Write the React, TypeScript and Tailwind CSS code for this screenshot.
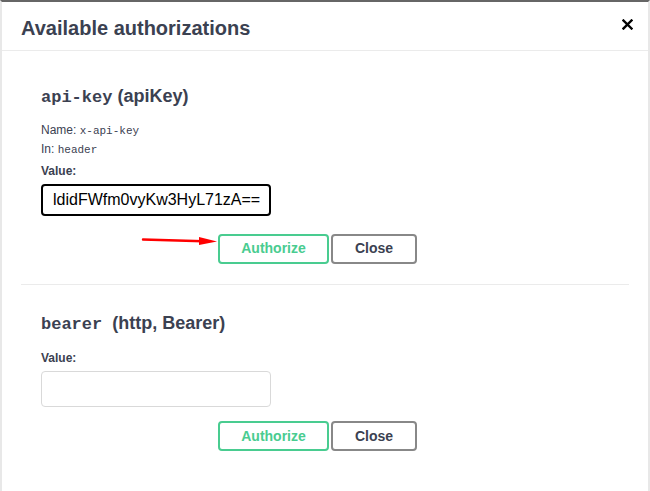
import React from "react";

const sans = "font-['Liberation_Sans',Arial,sans-serif]";
const mono = "font-['Liberation_Mono','DejaVu_Sans_Mono',monospace]";

const Buttons = ({ arrow }: { arrow?: boolean }) => (
  <div className="relative flex gap-[2px] pl-[177px]">
    {arrow && (
      <svg className="absolute left-[100px] top-[1px]" width="78" height="12" viewBox="0 0 78 12">
        <path d="M2 4.5 L62 6.2" stroke="#f00" strokeWidth="2.4" strokeLinecap="round" />
        <path d="M58 2 L76 6.4 L58 10 Z" fill="#f00" />
      </svg>
    )}
    <button className="h-[30px] w-[111px] rounded-[4px] border-2 border-[#49cc90] text-[14px] font-bold text-[#49cc90]">
      Authorize
    </button>
    <button className="h-[30px] w-[86px] rounded-[4px] border-2 border-[#888] text-[14px] font-bold text-[#3b4151]">
      Close
    </button>
  </div>
);

export default function App() {
  return (
    <div className={`${sans} h-[491px] w-[650px] overflow-hidden bg-white`}>
      <div className="h-full border-x-2 border-t-2 border-x-[#e8e8e8] border-t-[#666] bg-white">
        <div className="flex h-[49px] items-center justify-between border-b border-[#ebebeb] pl-[19px] pr-[15px]">
          <h3 className="pt-[3px] text-[20px] font-bold text-[#3b4151]">Available authorizations</h3>
          <svg className="mb-[4px]" width="11" height="11" viewBox="0 0 11 11">
            <path d="M1.5 1.5 L9.5 9.5 M9.5 1.5 L1.5 9.5" stroke="#000" strokeWidth="2.4" strokeLinecap="square" />
          </svg>
        </div>

        <div className="px-[19px]">
          <div className="px-[20px] pt-[32px] pb-[20px]">
            <h4 className="text-[18px] font-bold text-[#3b4151]">
              <span className={`${mono} text-[17px]`}>api-key</span> (apiKey)
            </h4>
            <div className="mt-[10px] text-[12px] text-[#3b4151]">
              <div className="h-[19px] leading-[19px]">
                Name: <span className={`${mono} text-[11px] leading-[19px]`}>x-api-key</span>
              </div>
              <div className="h-[19px] leading-[19px]">
                In: <span className={`${mono} text-[11px] leading-[19px]`}>header</span>
              </div>
            </div>
            <div className="mt-[3px] text-[12px] font-bold text-[#3b4151]">Value:</div>
            <div className="mt-[4px] flex h-[32px] w-[230px] items-center rounded-[4px] border-2 border-black px-[10px] text-[16px] text-black">
              ldidFWfm0vyKw3HyL71zA==<span className="ml-[1px] inline-block h-[18px] w-px bg-black" />
            </div>
            <div className="mt-[18px]">
              <Buttons arrow />
            </div>
          </div>

          <div className="border-t border-[#ebebeb] px-[20px] pt-[25px]">
            <h4 className="text-[18px] font-bold text-[#3b4151]">
              <span className={`${mono} text-[17px]`}>bearer</span>{" "}&nbsp;(http, Bearer)
            </h4>
            <div className="mt-[12px] text-[12px] font-bold text-[#3b4151]">Value:</div>
            <div className="mt-[4px] h-[36px] w-[230px] rounded-[4px] border border-[#d9d9d9]" />
            <div className="mt-[14px]">
              <Buttons />
            </div>
          </div>
        </div>
      </div>
    </div>
  );
}
